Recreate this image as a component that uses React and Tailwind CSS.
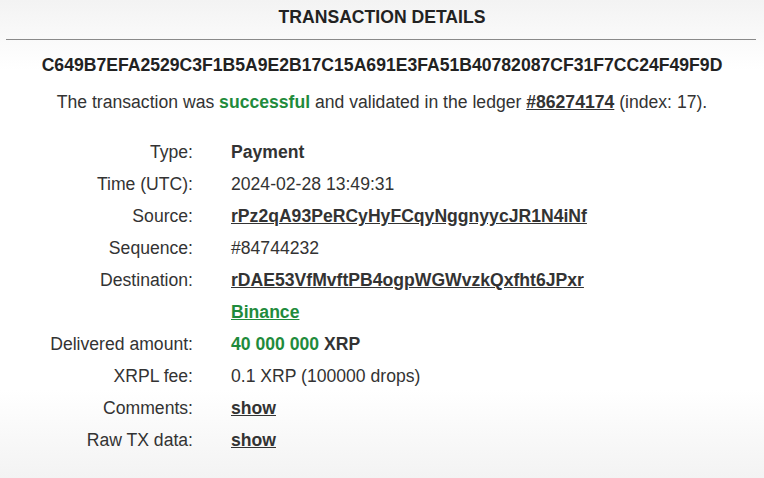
import React from "react";

const rows = [
  { label: "Type:", value: <span className="font-bold">Payment</span> },
  { label: "Time (UTC):", value: "2024-02-28 13:49:31" },
  {
    label: "Source:",
    value: <a className="font-bold underline">rPz2qA93PeRCyHyFCqyNggnyycJR1N4iNf</a>,
  },
  { label: "Sequence:", value: "#84744232" },
  {
    label: "Destination:",
    value: <a className="font-bold underline">rDAE53VfMvftPB4ogpWGWvzkQxfht6JPxr</a>,
  },
  {
    label: "",
    value: <a className="font-bold underline text-[#1f8b3c]">Binance</a>,
  },
  {
    label: "Delivered amount:",
    value: (
      <span className="font-bold">
        <span className="text-[#1f8b3c]">40 000 000</span> XRP
      </span>
    ),
  },
  { label: "XRPL fee:", value: "0.1 XRP (100000 drops)" },
  { label: "Comments:", value: <a className="font-bold underline">show</a> },
  { label: "Raw TX data:", value: <a className="font-bold underline">show</a> },
];

export default function App() {
  return (
    <div
      className="h-[478px] w-full overflow-hidden text-[17.6px] text-[#333] bg-[linear-gradient(to_bottom,#f3f3f3_0px,#ffffff_70px,#ffffff_390px,#f3f3f3_100%)]"
      style={{ fontFamily: '"Liberation Sans", Arial, sans-serif' }}
    >
      {/* header */}
      <div className="pt-[7px] text-center font-bold leading-5 text-[#222]">
        TRANSACTION DETAILS
      </div>
      <div className="ml-[6px] mr-[8px] mt-[12px] h-px bg-[#8a8a8a]" />

      <div className="mt-[15px] text-center font-bold leading-5 text-[#222]">
        C649B7EFA2529C3F1B5A9E2B17C15A691E3FA51B40782087CF31F7CC24F49F9D
      </div>
      <div className="mt-[17px] text-center leading-5">
        The transaction was{" "}
        <span className="font-bold text-[#1f8b3c]">successful</span> and
        validated in the ledger{" "}
        <a className="font-bold underline">#86274174</a> (index: 17).
      </div>

      {/* details table */}
      <div className="mt-[24px] grid grid-cols-[193px_1fr] gap-x-[38px]">
        {rows.map((r, i) => (
          <React.Fragment key={i}>
            <div className="h-8 leading-8 text-right whitespace-nowrap">{r.label}</div>
            <div className="h-8 leading-8 whitespace-nowrap">{r.value}</div>
          </React.Fragment>
        ))}
      </div>
    </div>
  );
}
